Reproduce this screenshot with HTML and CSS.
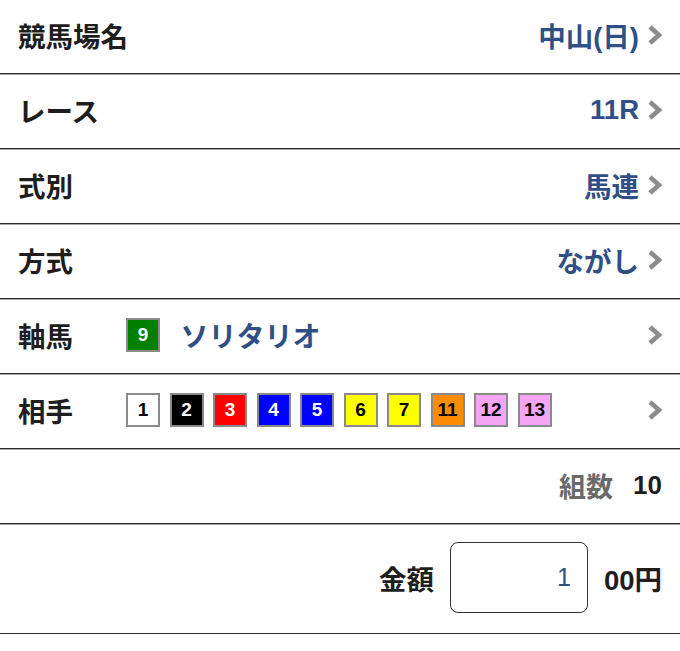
FILE: index.html
```html
<!DOCTYPE html>
<html lang="ja">
<head>
<meta charset="utf-8">
<title>馬券購入</title>
<link rel="stylesheet" href="styles.css">
</head>
<body>
<div class="form">
  <div class="row row-first">
    <span class="label">競馬場名</span>
    <span class="value">中山(日)</span>
    <svg class="chev" viewBox="0 0 16 22"><path d="M3 3l9 8-9 8"/></svg>
  </div>
  <div class="row">
    <span class="label">レース</span>
    <span class="value">11R</span>
    <svg class="chev" viewBox="0 0 16 22"><path d="M3 3l9 8-9 8"/></svg>
  </div>
  <div class="row">
    <span class="label">式別</span>
    <span class="value">馬連</span>
    <svg class="chev" viewBox="0 0 16 22"><path d="M3 3l9 8-9 8"/></svg>
  </div>
  <div class="row">
    <span class="label">方式</span>
    <span class="value">ながし</span>
    <svg class="chev" viewBox="0 0 16 22"><path d="M3 3l9 8-9 8"/></svg>
  </div>
  <div class="row">
    <span class="label label-fixed">軸馬</span>
    <div class="horses">
      <span class="num c-green">9</span>
      <span class="horse-name">ソリタリオ</span>
    </div>
    <svg class="chev" viewBox="0 0 16 22"><path d="M3 3l9 8-9 8"/></svg>
  </div>
  <div class="row">
    <span class="label label-fixed">相手</span>
    <div class="horses">
      <span class="num c-white">1</span>
      <span class="num c-black">2</span>
      <span class="num c-red">3</span>
      <span class="num c-blue">4</span>
      <span class="num c-blue">5</span>
      <span class="num c-yellow">6</span>
      <span class="num c-yellow">7</span>
      <span class="num c-orange">11</span>
      <span class="num c-pink">12</span>
      <span class="num c-pink">13</span>
    </div>
    <svg class="chev" viewBox="0 0 16 22"><path d="M3 3l9 8-9 8"/></svg>
  </div>
  <div class="row row-end">
    <span class="sub">組数</span>
    <span class="count">10</span>
  </div>
  <div class="row row-end row-tall">
    <span class="label">金額</span>
    <input class="amount" type="text" value="1">
    <span class="label">00円</span>
  </div>
</div>
</body>
</html>
```

FILE: styles.css
```css
* { box-sizing: border-box; }
body { margin: 0; background: #fff; font-family: "Liberation Sans", "Noto Sans CJK JP", sans-serif; font-weight: bold; color: #1e1e1e; }

.row { display: flex; align-items: center; height: 75px; padding: 0 17px 2px 18px; border-bottom: 1px solid #2b2b2b; box-shadow: 0 1px 0 #a8a8a8; }
.row-first { height: 74px; padding-bottom: 4px; }
.row-end { justify-content: flex-end; padding-right: 18px; }
.row-tall { height: 110px; }

.label { font-size: 27.5px; }
.label-fixed { width: 108px; flex: none; }
.value { margin-left: auto; font-size: 27.5px; color: #2f4f85; }
.chev { width: 16px; height: 22px; margin-left: 8px; flex: none; }
.chev path { fill: none; stroke: #8c8c8c; stroke-width: 4.6; }

.horses { display: flex; align-items: center; gap: 9.5px; flex: 1; }
.num { width: 34px; height: 34px; border: 2px solid #8a8a8a; display: flex; align-items: center; justify-content: center; font-size: 19px; }
.horse-name { margin-left: 11px; font-size: 28px; color: #2f4f85; }
.c-green { background: #008000; color: #fff; }
.c-white { background: #fff; color: #000; }
.c-black { background: #000; color: #fff; }
.c-red { background: #ff0000; color: #fff; }
.c-blue { background: #0000ff; color: #fff; }
.c-yellow { background: #ffff00; color: #000; }
.c-orange { background: #ff8c00; color: #000; }
.c-pink { background: #f4a6f4; color: #000; }

.sub { font-size: 27px; color: #6a6a6a; }
.count { font-size: 26px; margin-left: 20px; }

.amount { width: 138px; height: 71px; margin: 0 16px; border: 1.5px solid #333; border-radius: 8px; padding: 0 16px; text-align: right; font-family: "Liberation Sans", sans-serif; font-size: 25px; font-weight: normal; color: #2f4f85; }
```
